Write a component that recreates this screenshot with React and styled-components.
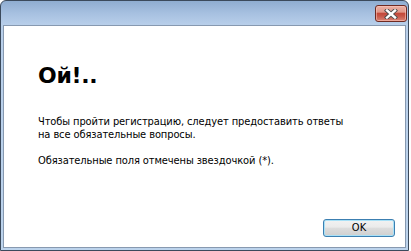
import styled, { createGlobalStyle } from 'styled-components';

const GlobalStyle = createGlobalStyle`
	html, body {
		margin: 0;
		padding: 0;
		background: #ffffff;
	}
	* {
		box-sizing: border-box;
	}
`

const Window = styled.div`
	width: 409px;
	height: 251px;
	display: flex;
	flex-direction: column;
	border: 1px solid #3b4a5c;
	border-radius: 6px 6px 0 0;
	padding: 0 2px 2px 2px;
	background: linear-gradient(#8fadd1 0px, #a6c0e0 12px, #b8cfea 24px, #bcd3ec 100%);
`

const TitleBar = styled.div`
	height: 24px;
	display: flex;
	justify-content: flex-end;
	align-items: flex-start;
	padding-top: 4px;
	flex-shrink: 0;
`

const CloseButton = styled.button`
	width: 32px;
	height: 17px;
	padding: 0;
	margin-right: -1px;
	display: flex;
	align-items: center;
	justify-content: center;
	border: 1px solid #6e2a22;
	border-radius: 3px;
	box-shadow: inset 0 0 0 1px rgba(255, 200, 190, 0.55);
	background: linear-gradient(#eab0a4 0%, #e0988a 40%, #c4493a 50%, #c55446 65%, #d98374 100%);
	cursor: default;
`

const Panel = styled.div`
	flex: 1;
	display: flex;
	flex-direction: column;
	background: #ffffff;
	border: 1px solid #8799b0;
	padding: 37px 10px 10px 34px;
	font-family: "DejaVu Sans Condensed", "DejaVu Sans", sans-serif;
	color: #000000;
`

const Heading = styled.h1`
	margin: 0 0 26px 0;
	font-family: "DejaVu Sans", sans-serif;
	font-weight: bold;
	font-size: 22px;
	line-height: 26px;
	letter-spacing: -0.3px;
`

const Message = styled.p`
	margin: 0 0 ${props => props.$gap}px 0;
	font-size: 11px;
	line-height: 13px;
	letter-spacing: -0.1px;
`

const Footer = styled.div`
	margin-top: auto;
	display: flex;
	justify-content: flex-end;
`

const Button = styled.button`
	width: 72px;
	height: 18px;
	padding: 0;
	border: 1px solid #3c7fb1;
	border-radius: 3px;
	box-shadow: inset 0 0 0 1px #a9e1f7;
	background: linear-gradient(#f2f2f2 0%, #ebebeb 45%, #dddddd 50%, #cfcfcf 100%);
	font-family: "DejaVu Sans Condensed", "DejaVu Sans", sans-serif;
	font-size: 11px;
	line-height: 14px;
	color: #000000;
	cursor: default;
`

function CloseIcon() {
	return (
		<svg width="14" height="10" viewBox="0 0 14 10">
			<path d="M3 1.5 L11 8.5 M11 1.5 L3 8.5" stroke="#4a4a4a" strokeWidth="4.2" strokeLinecap="square" />
			<path d="M3 1.5 L11 8.5 M11 1.5 L3 8.5" stroke="#ffffff" strokeWidth="2.4" strokeLinecap="square" />
		</svg>
	)
}

export default function App() {
	return (
		<>
			<GlobalStyle />
			<Window>
				<TitleBar>
					<CloseButton aria-label="Закрыть">
						<CloseIcon />
					</CloseButton>
				</TitleBar>
				<Panel>
					<Heading>Ой!..</Heading>
					<Message $gap={13}>
						Чтобы пройти регистрацию, следует предоставить ответы<br />
						на все обязательные вопросы.
					</Message>
					<Message $gap={0}>Обязательные поля отмечены звездочкой (*).</Message>
					<Footer>
						<Button>OK</Button>
					</Footer>
				</Panel>
			</Window>
		</>
	)
}
